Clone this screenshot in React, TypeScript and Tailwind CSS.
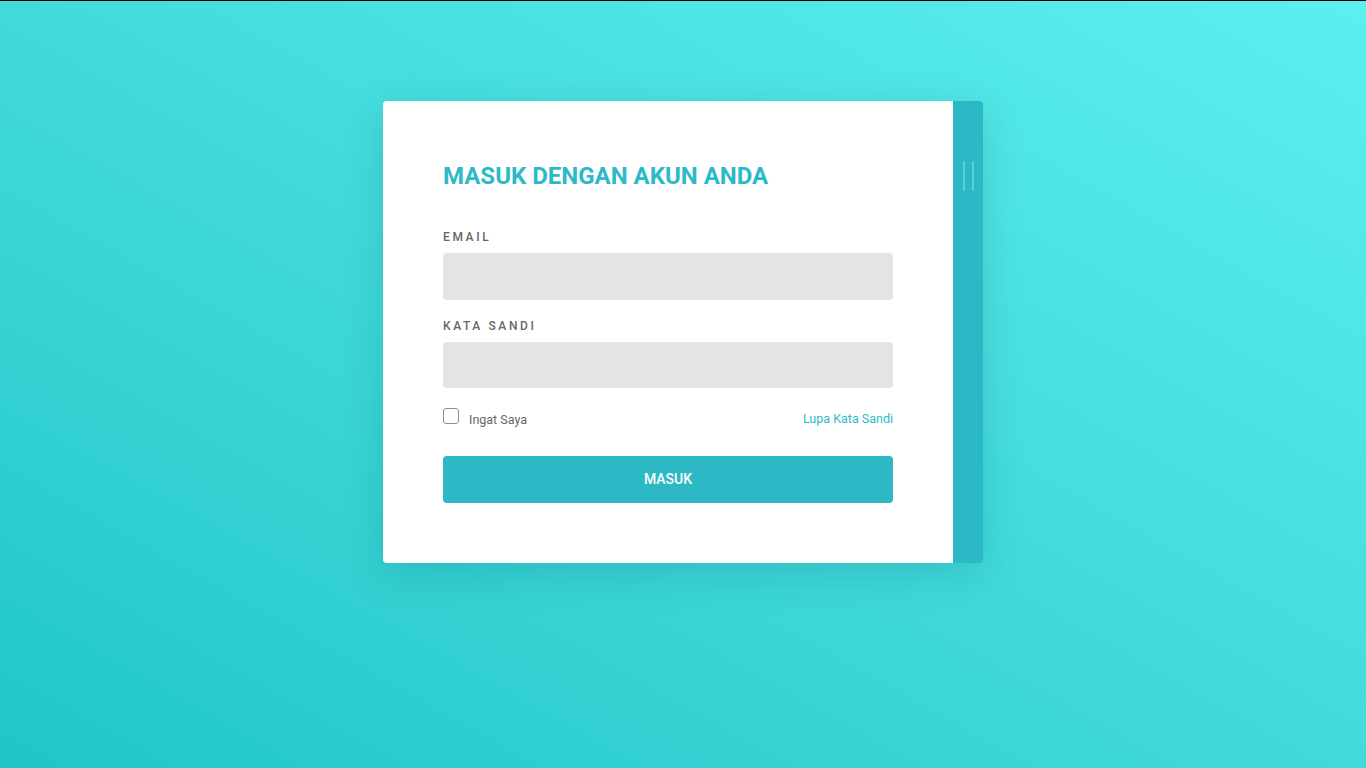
import { FC } from "react";

const App: FC = () => {
  return (
    <main
      className="w-full h-[768px] border-t border-black bg-gradient-to-tr from-[#1ec6c8] to-[#5cefef] flex justify-center pt-[100px]"
      style={{ fontFamily: "Roboto, 'Liberation Sans', sans-serif" }}
    >
      <div className="cardContainer flex w-[600px] h-[462px] rounded-[4px] shadow-[0_10px_40px_rgba(0,80,90,0.18)]">
        <div className="formContainer w-[570px] bg-white rounded-l-[4px] px-[60px] pt-[61px] pb-[60px]">
          <h1 className="text-[24px] leading-[28px] font-bold text-[#2cb9c8]">MASUK DENGAN AKUN ANDA</h1>
          <form className="flex flex-col mt-[39px]">
            <label htmlFor="email" className="text-[12px] leading-[16px] font-medium tracking-[2.6px] text-[#6b6662]">
              EMAIL
            </label>
            <input id="email" type="text" className="mt-[8px] h-[47px] rounded-[4px] bg-[#e4e4e4] outline-none px-3" />
            <label htmlFor="password" className="mt-[18px] text-[12px] leading-[16px] font-medium tracking-[2.6px] text-[#6b6662]">
              KATA SANDI
            </label>
            <input id="password" type="password" className="mt-[8px] h-[46px] rounded-[4px] bg-[#e4e4e4] outline-none px-3" />
            <div className="optionContainer flex justify-between items-center mt-[20px] h-[16px]">
              <label className="flex items-center">
                <span className="w-[16px] h-[16px] rounded-[3px] border-[1.5px] border-[#8e8e8e] bg-white" />
                <span className="ml-[10px] mt-[8px] text-[12.5px] text-[#666]">Ingat Saya</span>
              </label>
              <a className="text-[12.5px] text-[#2cb9c8] mt-[7px]">Lupa Kata Sandi</a>
            </div>
            <button type="button" className="mt-[32px] h-[47px] rounded-[4px] bg-[#2cb8c5] text-white text-[14px] font-medium">
              MASUK
            </button>
          </form>
        </div>
        <div className="sideStrip w-[30px] bg-[#2cb8c5] rounded-r-[4px] flex justify-center gap-[7px] pt-[60px]">
          <div className="w-[2px] h-[30px] bg-[#5ecfd8]" />
          <div className="w-[2px] h-[30px] bg-[#5ecfd8]" />
        </div>
      </div>
    </main>
  );
};

export default App;
